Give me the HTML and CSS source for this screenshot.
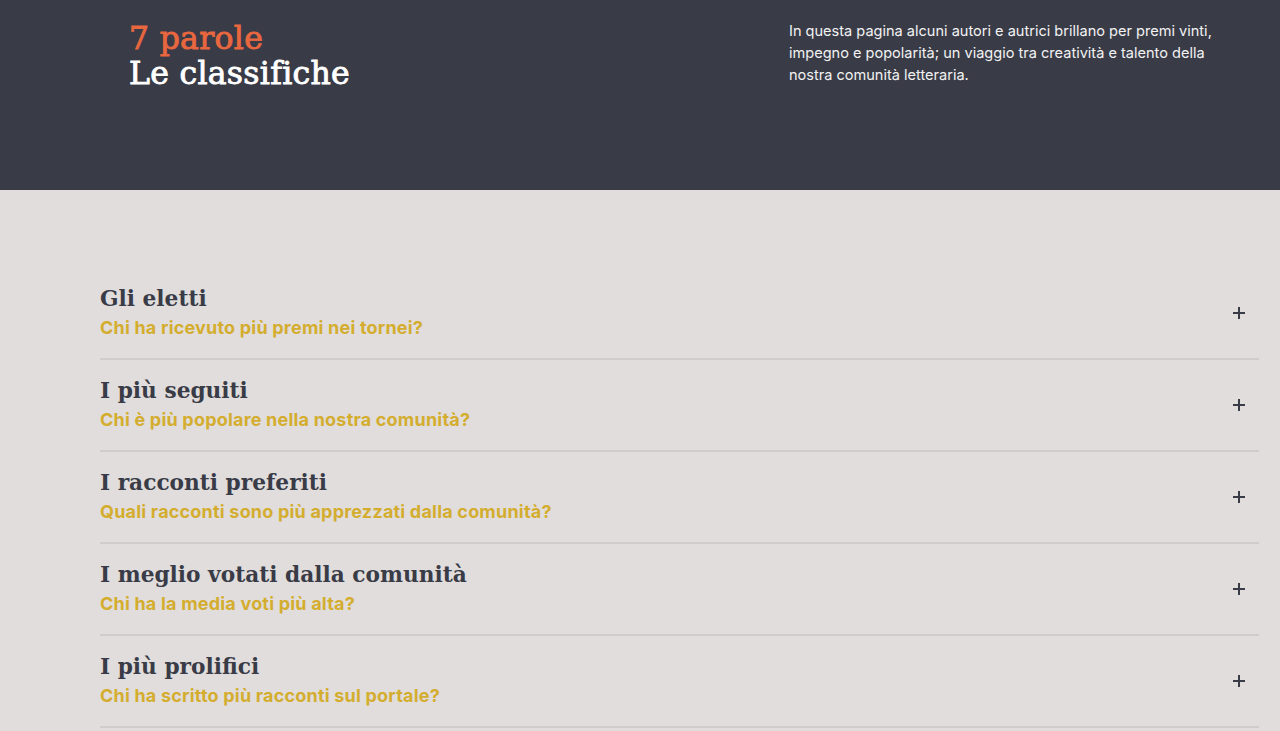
FILE: index.html
```html
<!DOCTYPE html>
<html lang="it">
<head>
<meta charset="utf-8">
<title>7 parole – Le classifiche</title>
<link rel="stylesheet" href="styles.css">
</head>
<body>
<header class="hero">
  <div class="hero-title">
    <div class="brand">7 parole</div>
    <h1 class="page-title">Le classifiche</h1>
  </div>
  <p class="hero-text">In questa pagina alcuni autori e autrici brillano per premi vinti, impegno e popolarità; un viaggio tra creatività e talento della nostra comunità letteraria.</p>
</header>
<main class="content">
  <ul class="accordion">
    <li class="acc-item">
      <div class="acc-text"><h2 class="acc-title">Gli eletti</h2><p class="acc-sub">Chi ha ricevuto più premi nei tornei?</p></div>
      <span class="acc-plus"></span>
    </li>
    <li class="acc-item">
      <div class="acc-text"><h2 class="acc-title">I più seguiti</h2><p class="acc-sub">Chi è più popolare nella nostra comunità?</p></div>
      <span class="acc-plus"></span>
    </li>
    <li class="acc-item">
      <div class="acc-text"><h2 class="acc-title">I racconti preferiti</h2><p class="acc-sub">Quali racconti sono più apprezzati dalla comunità?</p></div>
      <span class="acc-plus"></span>
    </li>
    <li class="acc-item">
      <div class="acc-text"><h2 class="acc-title">I meglio votati dalla comunità</h2><p class="acc-sub">Chi ha la media voti più alta?</p></div>
      <span class="acc-plus"></span>
    </li>
    <li class="acc-item">
      <div class="acc-text"><h2 class="acc-title">I più prolifici</h2><p class="acc-sub">Chi ha scritto più racconti sul portale?</p></div>
      <span class="acc-plus"></span>
    </li>
  </ul>
</main>
</body>
</html>
```
FILE: styles.css
```css
* { box-sizing: border-box; }
html, body { margin: 0; padding: 0; }
body {
  background: #e0dddc;
  font-family: Inter, "Liberation Sans", sans-serif;
}
.hero {
  background: #393b47;
  height: 190px;
  display: flex;
  justify-content: space-between;
  padding: 20px 61px 0 129px;
}
.hero-title {
  padding-top: 1px;
}
.brand {
  font-family: "DejaVu Serif", "Liberation Serif", serif;
  color: #e8673f;
  font-size: 31.5px;
  line-height: 35px;
  letter-spacing: 0.3px;
  -webkit-text-stroke: 0.9px currentColor;
}
.page-title {
  margin: 0;
  font-family: "DejaVu Serif", "Liberation Serif", serif;
  font-weight: normal;
  color: #ffffff;
  font-size: 31.5px;
  line-height: 35px;
  letter-spacing: 0.3px;
  -webkit-text-stroke: 0.9px currentColor;
}
.hero-text {
  margin: 0;
  width: 430px;
  color: #f2f2f2;
  font-size: 14.55px;
  line-height: 22px;
}
.content {
  padding: 78px 21px 0 100px;
}
.accordion {
  list-style: none;
  margin: 0;
  padding: 0;
}
.acc-item {
  display: flex;
  align-items: center;
  justify-content: space-between;
  height: 92px;
  padding: 17px 14px 17px 0;
  border-bottom: 2px solid #cfcccb;
}
.acc-title {
  margin: 0;
  font-family: "DejaVu Serif", "Liberation Serif", serif;
  font-weight: bold;
  font-size: 21.7px;
  line-height: 28px;
  color: #393b47;
}
.acc-sub {
  margin: 2px 0 0;
  font-weight: 700;
  font-size: 18px;
  letter-spacing: 0.2px;
  line-height: 26px;
  color: #d4ad2f;
}
.acc-plus {
  position: relative;
  width: 12px;
  height: 12px;
}
.acc-plus::before, .acc-plus::after {
  content: "";
  position: absolute;
  background: #393b47;
}
.acc-plus::before { left: 0; right: 0; top: 5px; height: 2px; }
.acc-plus::after { top: 0; bottom: 0; left: 5px; width: 2px; }
```
